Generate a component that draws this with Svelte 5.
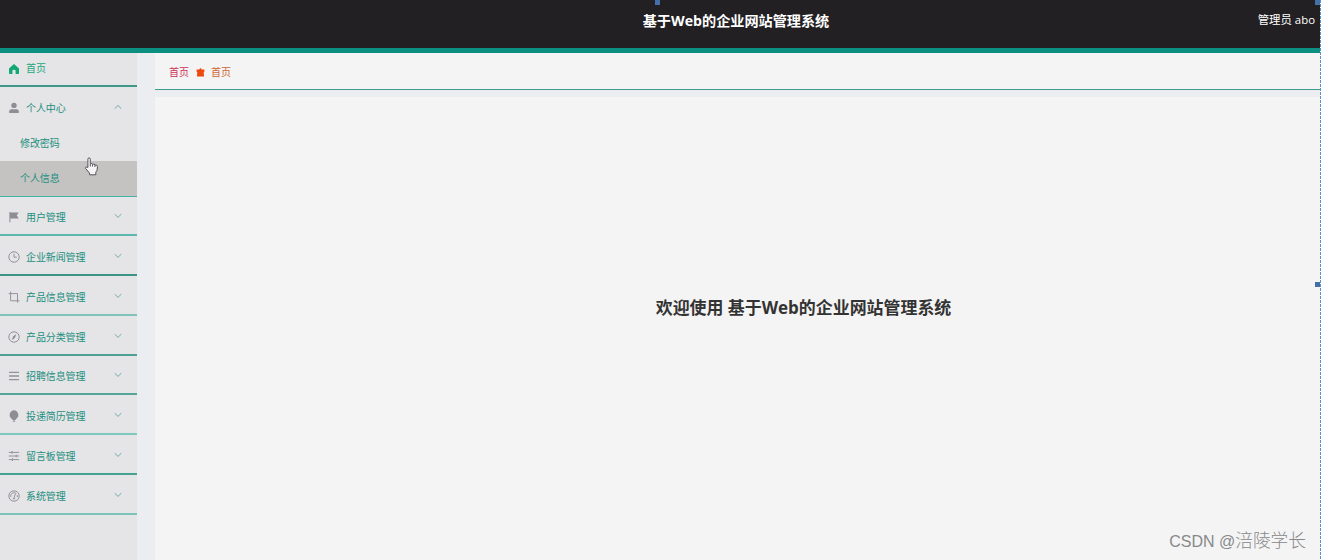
<script lang="ts">
  interface MenuItem {
    label: string;
    icon: string;
    height: number;
    line: string;
  }

  const title = '基于Web的企业网站管理系统';

  const menus: MenuItem[] = [
    { label: '用户管理', icon: 'flag', height: 39, line: '#5cb8ac' },
    { label: '企业新闻管理', icon: 'clock', height: 40, line: '#3b9486' },
    { label: '产品信息管理', icon: 'crop', height: 40, line: '#7fc4bb' },
    { label: '产品分类管理', icon: 'compass', height: 40, line: '#4d9f94' },
    { label: '招聘信息管理', icon: 'list', height: 39, line: '#55a69a' },
    { label: '投递简历管理', icon: 'bulb', height: 40, line: '#7fc8bf' },
    { label: '留言板管理', icon: 'sliders', height: 40, line: '#45a293' },
    { label: '系统管理', icon: 'gauge', height: 40, line: '#7cc4ba' }
  ];
</script>

{#snippet icon(name: string)}
  <svg class="icon" class:home={name === 'home'} viewBox="0 0 12 12">
    {#if name === 'home'}
      <path class="solid" d="M6 1 11 5.5V10.2Q11 11 10.2 11H7.6V7.8Q7.6 6.7 6 6.7T4.4 7.8V11H1.8Q1 11 1 10.2V5.5Z" />
    {:else if name === 'user'}
      <circle class="solid" cx="6" cy="3.4" r="2.7" />
      <path class="solid" d="M1.2 11V9.4Q1.2 7.2 3.5 7.2H8.5Q10.8 7.2 10.8 9.4V11Z" />
    {:else if name === 'flag'}
      <path class="solid" d="M1.4 1H2.4V1.5H10.7L8.8 4.2 10.7 7.4H2.4V11.3H1.4Z" />
    {:else if name === 'clock'}
      <circle cx="6" cy="6" r="5.2" />
      <path d="M6 2.8V6.2H8.7" />
    {:else if name === 'crop'}
      <path d="M0.7 2.6H9.5V11.6M2.6 0.6V9.8H11.5" />
    {:else if name === 'compass'}
      <circle cx="6" cy="6" r="5.2" />
      <path class="solid" d="M8.4 3 6.9 6.9 3.8 8.9 5.2 5.2Z" />
    {:else if name === 'list'}
      <path class="thick" d="M1 2.4H11M1 6H11M1 9.6H11" />
    {:else if name === 'bulb'}
      <path class="solid" d="M6 .2A4.7 4.7 0 0 1 8.6 8.5Q7.6 9.2 7.5 10H4.5Q4.4 9.2 3.4 8.5A4.7 4.7 0 0 1 6 .2ZM4.9 10.4H7.1V11.8H4.9Z" />
    {:else if name === 'sliders'}
      <path d="M.8 2.4H11.2M.8 6H11.2M.8 9.6H11.2M4 1V3.8M8.2 4.6V7.4M4.5 8.2V11" />
    {:else if name === 'gauge'}
      <circle cx="6" cy="6" r="5.2" />
      <path d="M2.8 7A3.4 3.4 0 0 1 8.3 3.5M9.2 5.2V7M7.4 3.8 6 8.2M4.8 8.7H7.2" />
    {/if}
  </svg>
{/snippet}

{#snippet arrow(open: boolean)}
  <svg class="arrow" viewBox="0 0 8 6">
    <path d={open ? 'M.7 4.6 4 1.4 7.3 4.6' : 'M.7 1.2 4 4.4 7.3 1.2'} />
  </svg>
{/snippet}

<div class="app">
  <header>
    <h1>{title}</h1>
    <span class="account">管理员 abo</span>
  </header>

  <div class="body">
    <aside>
      <div class="item first">
        {@render icon('home')}
        <span>首页</span>
      </div>
      <div class="group">
        <div class="item parent">
          {@render icon('user')}
          <span>个人中心</span>
          {@render arrow(true)}
        </div>
        <div class="sub">修改密码</div>
        <div class="sub active">个人信息</div>
      </div>
      {#each menus as menu}
        <div class="item" style="height: {menu.height}px; border-color: {menu.line}">
          {@render icon(menu.icon)}
          <span>{menu.label}</span>
          {@render arrow(false)}
        </div>
      {/each}
    </aside>

    <main>
      <nav>
        <span class="crumb">首页</span>
        <svg class="marker" viewBox="0 0 10 10">
          <path d="M5 0 6.5 1.8H9.3V4.2L8.5 5 9 9.5H1L1.5 5 .7 4.2V1.8H3.5Z" />
        </svg>
        <span class="crumb current">首页</span>
      </nav>
      <section>
        <h2>欢迎使用 {title}</h2>
      </section>
    </main>
  </div>

  <svg class="pointer" viewBox="0 0 14 19">
    <path d="M3.4 10.5V2.2Q3.5.8 4.6.8T5.8 2.2V6.7L7.3 6.4 8 7.2 9.7 7 10.4 8 12.2 8.2 13 9.8 12.5 13.4 11.3 15.2V17.8H5.2L4.8 15.8 1 11.4Q.8 9.8 2.1 10Z" />
    <path d="M5.8 7V9.5M8 7.5V9.5M10.4 8.2V10" />
  </svg>

  <div class="watermark"><span>CSDN @</span>涪陵学长</div>
  <i class="edge"></i>
  <i class="handle top"></i>
  <i class="handle corner"></i>
  <i class="handle middle"></i>
</div>

<style>
  :global(body) {
    margin: 0;
    overflow: hidden;
  }

  .app {
    position: relative;
    width: 1321px;
    height: 560px;
    display: flex;
    flex-direction: column;
    overflow: hidden;
    background: #ecedf1;
    font-family: "Open Sans", "Noto Sans CJK SC", sans-serif;
  }

  header {
    flex: none;
    box-sizing: border-box;
    height: 53px;
    display: grid;
    grid-template-columns: 1fr auto 1fr;
    align-items: center;
    padding: 0 6px 7px 157px;
    background: #232024;
    border-bottom: 5px solid #0b8f80;
    color: #fff;
  }

  h1 {
    grid-column: 2;
    margin: 0;
    font-size: 14.15px;
    line-height: 20px;
    white-space: nowrap;
  }

  .account {
    justify-self: end;
    font-size: 11.4px;
    line-height: 16px;
    white-space: nowrap;
    transform: translateY(-1px);
  }

  .body {
    flex: 1;
    min-height: 0;
    display: flex;
    gap: 18px;
  }

  aside {
    flex: none;
    width: 137px;
    background: #e5e4e6;
    color: #1b8f7f;
    font-size: 10px;
    letter-spacing: -0.1px;
  }

  .item {
    box-sizing: border-box;
    height: 40px;
    display: flex;
    align-items: center;
    padding: 3px 14px 0 8px;
    border-bottom: 2px solid #3f998b;
  }

  .item span {
    margin-left: 6px;
    line-height: 14px;
  }

  .item.first {
    height: 34px;
    padding-top: 1px;
    padding-bottom: 4px;
    color: #22a87b;
  }

  .item.parent {
    height: 39px;
    padding-top: 2px;
    border: 0;
  }

  .group {
    border-bottom: 1px solid #43b3a4;
  }

  .sub {
    height: 35px;
    padding-left: 20px;
    line-height: 35px;
  }

  .sub.active {
    background: #c5c3c2;
  }

  .icon {
    flex: none;
    width: 12px;
    height: 12px;
    fill: none;
    stroke: #949399;
    stroke-width: 1;
  }

  .icon .solid {
    fill: #8e8d94;
    stroke: none;
  }

  .icon .thick {
    stroke-width: 1.4;
  }

  .icon.home {
    margin-top: 3px;
  }

  .icon.home .solid {
    fill: #12a874;
  }

  .arrow {
    width: 8px;
    height: 6px;
    margin: 0 1px 2px auto;
    fill: none;
    stroke: #72ada2;
    stroke-width: 1;
  }

  main {
    flex: 1;
    display: flex;
    flex-direction: column;
    gap: 7px;
  }

  nav {
    box-sizing: border-box;
    height: 37px;
    display: flex;
    align-items: center;
    padding: 2px 14px 0;
    background: #f4f4f4;
    border-bottom: 1px solid #3d9a8d;
    font-size: 10px;
    line-height: 14px;
  }

  .crumb {
    color: #cf3159;
  }

  .crumb.current {
    color: #cd6532;
  }

  .marker {
    width: 9px;
    height: 9px;
    margin: 0 6px 0 7px;
    fill: #ef480e;
  }

  section {
    flex: 1;
    display: flex;
    justify-content: center;
    align-items: center;
    padding: 0 0 41px;
    box-sizing: border-box;
    background: #f4f4f4;
  }

  h2 {
    margin: 0 0 0 131px;
    color: #333;
    font-size: 16.96px;
    line-height: 24px;
    white-space: nowrap;
  }

  .pointer {
    position: absolute;
    left: 84px;
    top: 157px;
    width: 15px;
    height: 19px;
    fill: #f4f3f5;
    stroke: #55535b;
    stroke-width: 1;
  }

  .watermark {
    position: absolute;
    right: 15px;
    bottom: 6px;
    color: #88888a;
    font-family: "Liberation Sans", "Noto Sans CJK SC", sans-serif;
    font-size: 17.7px;
    font-weight: 300;
    line-height: 24px;
    white-space: nowrap;
  }

  .watermark span {
    font-size: 16px;
  }

  .edge {
    position: absolute;
    top: 0;
    right: 0;
    width: 1px;
    height: 560px;
    background: repeating-linear-gradient(#5b8fd4 0 3px, #fff 3px 4px);
  }

  .handle {
    position: absolute;
    width: 5px;
    height: 5px;
    background: #4470a9;
  }

  .handle.top {
    left: 655px;
    top: 0;
  }

  .handle.corner {
    right: 1px;
    top: 0;
  }

  .handle.middle {
    right: 1px;
    top: 282px;
  }
</style>
